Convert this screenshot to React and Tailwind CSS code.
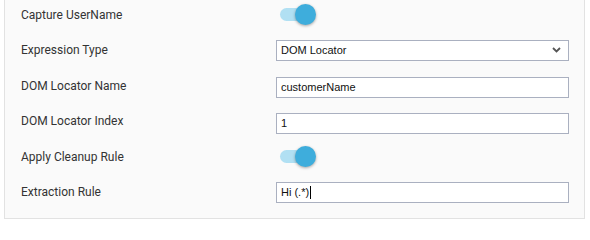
import React, { useState } from 'react';

function Toggle({ on }) {
  return (
    <div className="relative w-[38px] h-[21px] flex items-center">
      <div className={`ml-[1px] w-[34px] h-[13px] rounded-full ${on ? 'bg-[#b1e0f3]' : 'bg-gray-300'}`} />
      <div
        className={`absolute top-0 w-[21px] h-[21px] rounded-full shadow-[0_1px_3px_rgba(0,0,0,0.35)] ${
          on ? 'left-[16px] bg-[#3eaddc]' : 'left-0 bg-white'
        }`}
      />
    </div>
  );
}

function Row({ label, children }) {
  return (
    <div className="flex items-center h-[21px]">
      <div className="w-[255px] text-[12px] text-[#333] font-['Roboto',sans-serif]">{label}</div>
      <div className="flex-1">{children}</div>
    </div>
  );
}

const inputCls =
  "w-full h-[21px] px-[4px] bg-white border border-[#aab0c0] text-[11px] text-[#111] font-['Liberation_Sans',Arial,sans-serif] outline-none";

export default function App() {
  const [captureName, setCaptureName] = useState(true);
  const [cleanup, setCleanup] = useState(true);

  return (
    <div className="w-[590px] h-[223px] bg-white">
      <div className="ml-[4px] w-[581px] h-[219px] bg-[#fafafa] border-l border-r border-b border-[#e2e2e2] pl-[16px] pr-[15px] pt-[4px] pb-[15px] flex flex-col gap-[14.6px]">
        <Row label="Capture UserName">
          <button type="button" onClick={() => setCaptureName(!captureName)} className="ml-[3px] block">
            <Toggle on={captureName} />
          </button>
        </Row>

        <Row label="Expression Type">
          <div className={`${inputCls} flex items-center justify-between pr-[7px]`}>
            <span>DOM Locator</span>
            <svg width="9" height="6" viewBox="0 0 9 6" className="text-[#555]">
              <path d="M1 1l3.5 3.5L8 1" fill="none" stroke="currentColor" strokeWidth="1.8" />
            </svg>
          </div>
        </Row>

        <Row label="DOM Locator Name">
          <input className={inputCls} defaultValue="customerName" readOnly />
        </Row>

        <Row label="DOM Locator Index">
          <input className={inputCls} defaultValue="1" readOnly />
        </Row>

        <Row label="Apply Cleanup Rule">
          <button type="button" onClick={() => setCleanup(!cleanup)} className="ml-[3px] block">
            <Toggle on={cleanup} />
          </button>
        </Row>

        <Row label="Extraction Rule">
          <div className={`${inputCls} border-[#3bb0e0] flex items-center`}>
            <span>Hi (.*)</span>
            <span className="ml-[1px] w-[1px] h-[13px] bg-black" />
          </div>
        </Row>
      </div>
    </div>
  );
}
